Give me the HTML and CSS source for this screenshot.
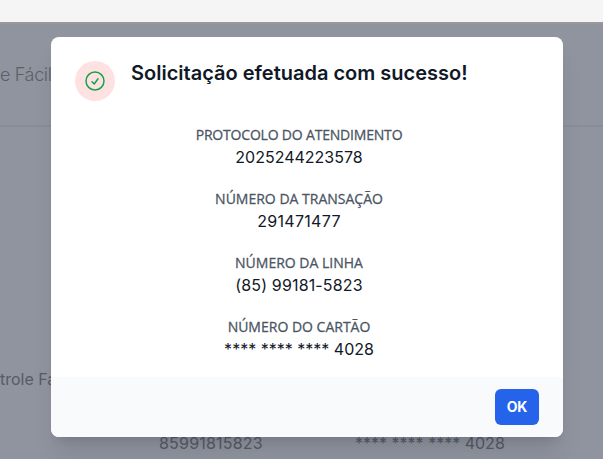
FILE: index.html
```html
<!DOCTYPE html>
<html lang="pt-BR">
<head>
    <meta charset="UTF-8">
    <meta name="viewport" content="width=device-width, initial-scale=1.0">
    <title>Solicitação efetuada</title>
    <link rel="stylesheet" href="styles.css">
</head>
<body>
    <div class="topbar"></div>

    <div class="page">
        <div class="page-header">e Fácil</div>
        <div class="page-plan">trole Fácil</div>
        <div class="page-row">
            <span class="page-line">85991815823</span>
            <span class="page-card">**** **** **** 4028</span>
        </div>
    </div>

    <div class="overlay">
        <div class="modal" role="dialog" aria-modal="true">
            <div class="modal-body">
                <div class="modal-header">
                    <div class="modal-icon">
                        <svg width="24" height="24" viewBox="0 0 24 24" fill="none" stroke="currentColor" stroke-width="1.5" stroke-linecap="round" stroke-linejoin="round">
                            <path d="M9 12.75L11.25 15L15 9.75"/>
                            <circle cx="12" cy="12" r="9"/>
                        </svg>
                    </div>
                    <h3>Solicitação efetuada com sucesso!</h3>
                </div>

                <dl class="details">
                    <div>
                        <dt class="tight">PROTOCOLO DO ATENDIMENTO</dt>
                        <dd>2025244223578</dd>
                    </div>
                    <div>
                        <dt>NÚMERO DA TRANSAÇÃO</dt>
                        <dd class="wide">291471477</dd>
                    </div>
                    <div>
                        <dt>NÚMERO DA LINHA</dt>
                        <dd class="phone">(85) 99181-5823</dd>
                    </div>
                    <div>
                        <dt>NÚMERO DO CARTÃO</dt>
                        <dd>**** **** **** 4028</dd>
                    </div>
                </dl>
            </div>

            <div class="modal-footer">
                <button class="btn-ok" type="button">OK</button>
            </div>
        </div>
    </div>
</body>
</html>
```

FILE: styles.css
```css
* {
    box-sizing: border-box;
}

body {
    margin: 0;
    height: 459px;
    overflow: hidden;
    font-family: Inter, sans-serif;
    font-size: 16px;
    font-weight: 385;
    line-height: 24px;
    background: #f5f5f5;
}

.topbar {
    height: 22px;
    background: #f5f5f5;
}

/* Page behind the modal, already dimmed */
.page {
    height: 437px;
    background: #90949f;
    border-top: 2px solid #97999b;
    color: #565b67;
}

.page-header {
    height: 103px;
    padding-top: 37px;
    border-bottom: 2px solid #898d98;
    font-size: 18px;
    font-weight: 360;
    line-height: 28px;
    letter-spacing: -0.35px;
    color: #5b5f69;
}

.page-plan {
    margin-top: 240px;
}

.page-row {
    display: flex;
    margin-top: 40px;
    padding-left: 159px;
}

.page-line {
    width: 196px;
    letter-spacing: 0.2px;
}

.overlay {
    position: absolute;
    inset: 0;
    padding: 37px 0 0 51px;
}

.modal {
    width: 512px;
    border-radius: 8px;
    overflow: hidden;
    background: #fff;
    box-shadow: 0 20px 25px -5px rgba(0, 0, 0, 0.1), 0 8px 10px -6px rgba(0, 0, 0, 0.1);
}

.modal-body {
    height: 340px;
    padding: 24px 24px 16px;
}

.modal-header {
    display: flex;
    gap: 16px;
}

.modal-icon {
    display: flex;
    align-items: center;
    justify-content: center;
    width: 40px;
    height: 40px;
    border-radius: 50%;
    background: #fee2e2;
    color: #16a34a;
}

.modal h3 {
    margin: 0;
    font-size: 20px;
    font-weight: 600;
    line-height: 24px;
    color: #111827;
}

.details {
    display: flex;
    flex-direction: column;
    gap: 20px;
    margin: 24px 0 0;
    padding-right: 16px;
    text-align: center;
}

.details dt {
    font-family: "Open Sans", "Noto Sans", sans-serif;
    font-size: 14px;
    font-weight: 400;
    line-height: 20px;
    color: #4b5563;
    -webkit-text-stroke: 0.28px #4b5563;
}

.details .tight {
    letter-spacing: -0.19px;
}

.details dd {
    margin: 0;
    color: #111827;
}

.details .wide {
    letter-spacing: 0.3px;
}

.details .phone {
    letter-spacing: 0.15px;
}

.modal-footer {
    display: flex;
    justify-content: flex-end;
    padding: 12px 24px;
    background: #f9fafb;
}

.btn-ok {
    width: 44px;
    height: 36px;
    padding: 0 0 1px;
    border: 0;
    border-radius: 6px;
    background: #2563eb;
    color: #fff;
    font-family: Inter, sans-serif;
    font-size: 14px;
    font-weight: 700;
    letter-spacing: -0.3px;
}
```
